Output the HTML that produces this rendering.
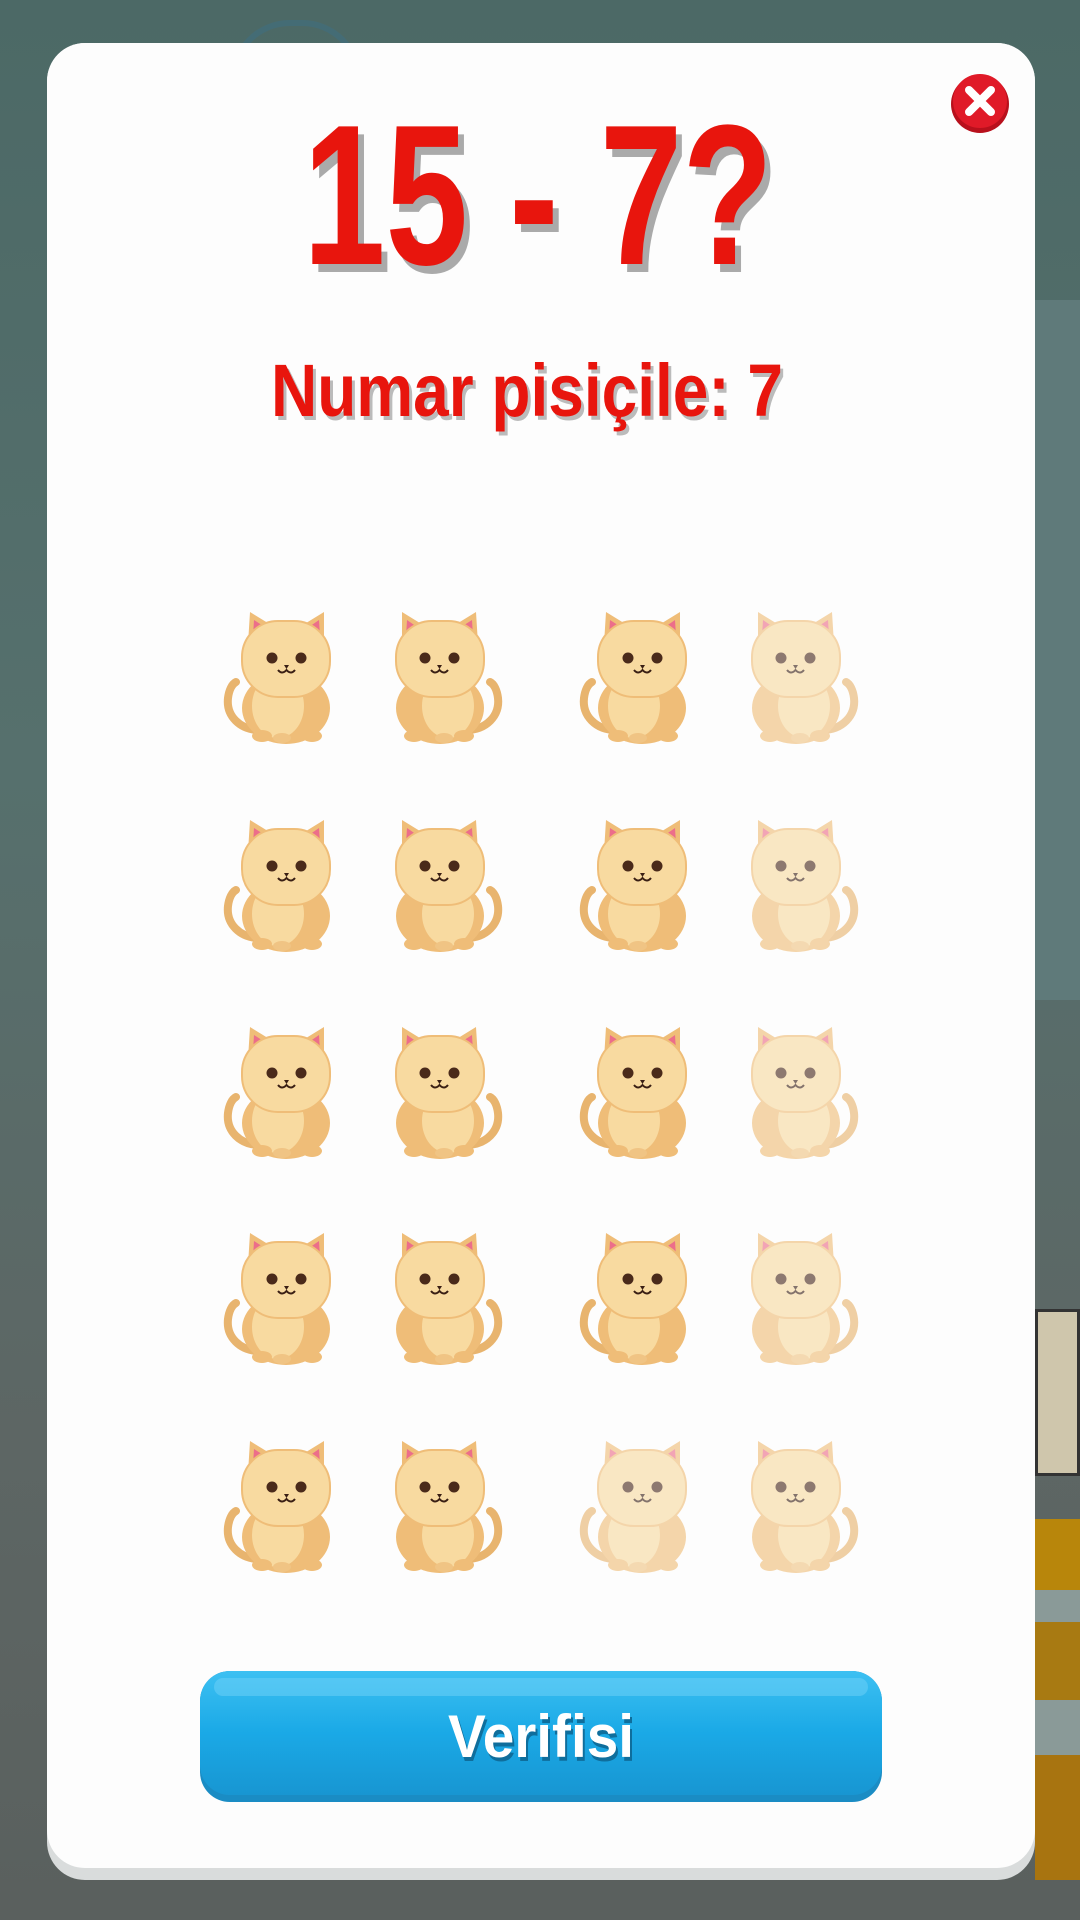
<!DOCTYPE html>
<html><head><meta charset="utf-8">
<style>
html,body{margin:0;padding:0}
body{width:1080px;height:1920px;position:relative;overflow:hidden;background:linear-gradient(#4c6966 0%,#56706d 40%,#5d6664 75%,#5a605e 100%);font-family:"Liberation Sans",sans-serif}
.abs{position:absolute}
</style></head><body>
<div class="abs" style="left:230px;top:20px;width:120px;height:60px;border-radius:60px 60px 0 0;border:6px solid #3f6e80;border-bottom:none;opacity:.6"></div>
<div class="abs" style="left:1035px;top:300px;width:45px;height:700px;background:#5f7a7a"></div>
<div class="abs" style="left:1035px;top:1309px;width:45px;height:167px;background:#cfc6ac;border:3px solid #333;box-sizing:border-box"></div>
<div class="abs" style="left:1035px;top:1519px;width:45px;height:71px;background:#b8860b"></div>
<div class="abs" style="left:1035px;top:1590px;width:45px;height:32px;background:#8a9a98"></div>
<div class="abs" style="left:1035px;top:1622px;width:45px;height:78px;background:#a87a12"></div>
<div class="abs" style="left:1035px;top:1700px;width:45px;height:55px;background:#8a9a98"></div>
<div class="abs" style="left:1035px;top:1755px;width:45px;height:125px;background:#a87410"></div>
<div class="abs" style="left:47px;top:43px;width:988px;height:1837px;border-radius:38px;background:#d9dcdc"></div>
<div class="abs" style="left:47px;top:43px;width:988px;height:1825px;border-radius:38px;background:#fdfdfd"></div>
<svg class="abs" style="left:0;top:0" width="1080" height="1920" viewBox="0 0 1080 1920">
<defs>
<g id="cat">
<path d="M40 118 C20 118 6 104 8 86 C9 78 12 72 16 70" fill="none" stroke="#e8b46e" stroke-width="8" stroke-linecap="round"/>
<ellipse cx="66" cy="96" rx="44" ry="36" fill="#efbd78"/>
<ellipse cx="58" cy="94" rx="26" ry="32" fill="#f8daa0"/>
<ellipse cx="42" cy="124" rx="10" ry="6" fill="#efbd78"/>
<ellipse cx="62" cy="126" rx="9" ry="5" fill="#f0c484"/>
<ellipse cx="92" cy="124" rx="10" ry="6" fill="#efbd78"/>
<path d="M28 32 L30 0 L56 16 Z" fill="#efbd78"/>
<path d="M104 32 L104 0 L78 16 Z" fill="#efbd78"/>
<path d="M33 24 L34 8 L48 17 Z" fill="#ec6e8a"/>
<path d="M100 24 L99 8 L86 17 Z" fill="#ec6e8a"/>
<rect x="22" y="9" width="88" height="76" rx="36" fill="#f8daa0" stroke="#efbd78" stroke-width="2"/>
<circle cx="52" cy="46" r="5.5" fill="#4a2a1a"/>
<circle cx="81" cy="46" r="5.5" fill="#4a2a1a"/>
<path d="M64 53 L69 53 L66.5 57 Z" fill="#3a1f14"/>
<path d="M58 58 Q62 63 66.5 58 Q71 63 75 58" fill="none" stroke="#3a1f14" stroke-width="2"/>
</g>
<g id="catP" opacity="0.62"><use href="#cat"/></g>
<linearGradient id="btn" x1="0" y1="0" x2="0" y2="1"><stop offset="0" stop-color="#3dc0f2"/><stop offset="0.5" stop-color="#1aa9e6"/><stop offset="1" stop-color="#1896d2"/></linearGradient>
</defs>
<circle cx="980" cy="104" r="29" fill="#b8101c"/>
<circle cx="980" cy="101" r="27" fill="#e01a28"/>
<path d="M969 90 L991 112 M991 90 L969 112" stroke="#fff" stroke-width="8" stroke-linecap="round"/>
<text x="544" y="272" text-anchor="middle" textLength="470" lengthAdjust="spacingAndGlyphs" font-family="Liberation Sans" font-weight="bold" font-size="200" fill="#aaa">15 - 7?</text>
<text x="538" y="264" text-anchor="middle" textLength="470" lengthAdjust="spacingAndGlyphs" font-family="Liberation Sans" font-weight="bold" font-size="200" fill="#e8150d">15 - 7?</text>
<text x="530" y="420" text-anchor="middle" textLength="512" lengthAdjust="spacingAndGlyphs" font-family="Liberation Sans" font-weight="bold" font-size="74" fill="#bbb">Numar pisiçile: 7</text>
<text x="527" y="416" text-anchor="middle" textLength="512" lengthAdjust="spacingAndGlyphs" font-family="Liberation Sans" font-weight="bold" font-size="74" fill="#e8150d">Numar pisiçile: 7</text>
<g transform="translate(220,612)"><use href="#cat"/></g>
<g transform="translate(506,612) scale(-1,1)"><use href="#cat"/></g>
<g transform="translate(576,612)"><use href="#cat"/></g>
<g transform="translate(862,612) scale(-1,1)"><use href="#catP"/></g>
<g transform="translate(220,820)"><use href="#cat"/></g>
<g transform="translate(506,820) scale(-1,1)"><use href="#cat"/></g>
<g transform="translate(576,820)"><use href="#cat"/></g>
<g transform="translate(862,820) scale(-1,1)"><use href="#catP"/></g>
<g transform="translate(220,1027)"><use href="#cat"/></g>
<g transform="translate(506,1027) scale(-1,1)"><use href="#cat"/></g>
<g transform="translate(576,1027)"><use href="#cat"/></g>
<g transform="translate(862,1027) scale(-1,1)"><use href="#catP"/></g>
<g transform="translate(220,1233)"><use href="#cat"/></g>
<g transform="translate(506,1233) scale(-1,1)"><use href="#cat"/></g>
<g transform="translate(576,1233)"><use href="#cat"/></g>
<g transform="translate(862,1233) scale(-1,1)"><use href="#catP"/></g>
<g transform="translate(220,1441)"><use href="#cat"/></g>
<g transform="translate(506,1441) scale(-1,1)"><use href="#cat"/></g>
<g transform="translate(576,1441)"><use href="#catP"/></g>
<g transform="translate(862,1441) scale(-1,1)"><use href="#catP"/></g>
<rect x="200" y="1671" width="682" height="131" rx="30" fill="#1a8cc4"/>
<rect x="200" y="1671" width="682" height="124" rx="30" fill="url(#btn)"/>
<rect x="214" y="1678" width="654" height="18" rx="9" fill="#6fd2f7" opacity="0.5"/>
<text x="543" y="1761" text-anchor="middle" textLength="186" lengthAdjust="spacingAndGlyphs" font-family="Liberation Sans" font-weight="bold" font-size="60" fill="#0f6e9c">Verifisi</text>
<text x="541" y="1757" text-anchor="middle" textLength="186" lengthAdjust="spacingAndGlyphs" font-family="Liberation Sans" font-weight="bold" font-size="60" fill="#fff">Verifisi</text>
</svg>
</body></html>
